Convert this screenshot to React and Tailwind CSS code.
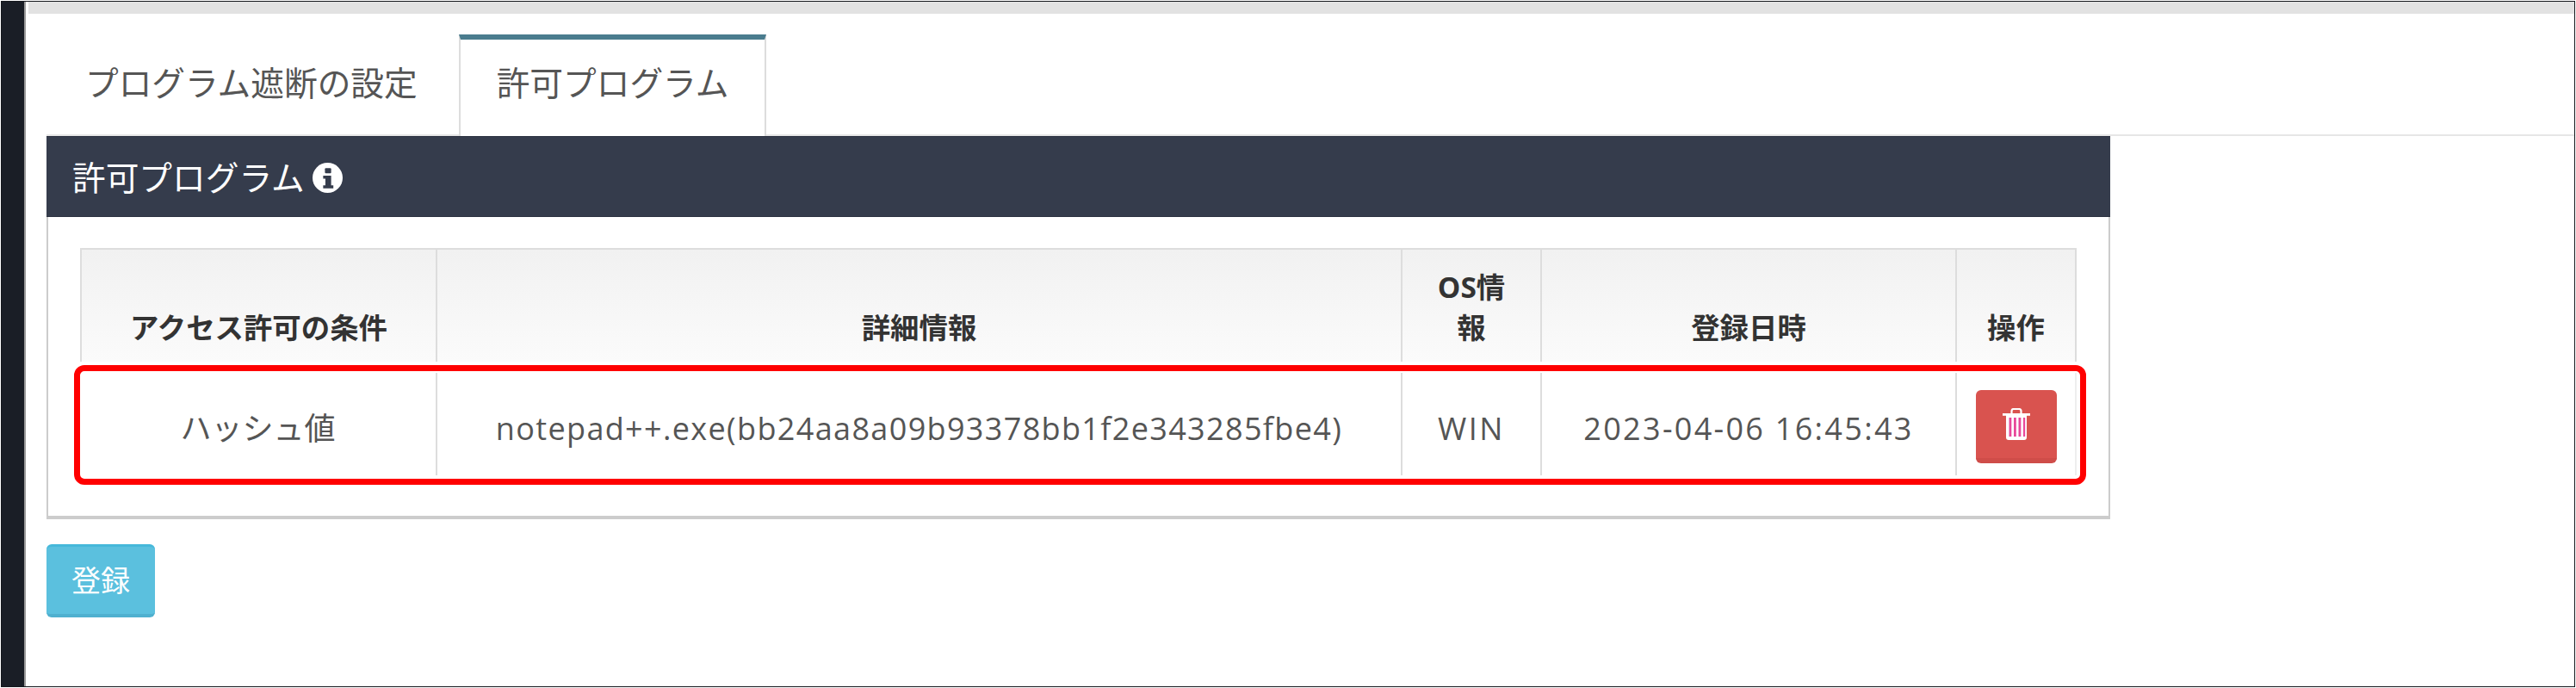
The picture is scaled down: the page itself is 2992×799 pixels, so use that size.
const jp = "font-['Open_Sans','Noto_Sans_CJK_JP',sans-serif]";

function InfoIcon() {
  return (
    <svg viewBox="0 0 34 34" className="ml-[9px] w-[35px] h-[35px] shrink-0">
      <circle cx="17" cy="17" r="17" fill="#fff" />
      <rect x="14" y="6" width="7" height="6" rx="1" fill="#353c4c" />
      <path d="M12 14.5h9v11h2.5V29h-11.5v-3.500h2.500v-7.500H12z" fill="#353c4c" />
    </svg>
  );
}

function TrashIcon() {
  return (
    <svg viewBox="0 0 32 37" className="w-[32px] h-[37px]">
      <path d="M10.500 7V3.500Q10.500 1 13 1h6q2.500 0 2.500 2.500V7" fill="none" stroke="#fff" strokeWidth="2.200" />
      <rect x="0" y="6" width="32" height="2.800" fill="#fff" />
      <path d="M4 8v26q0 3 3 3h18q3 0 3-3V8z" fill="#fff" />
      <rect x="7.500" y="11" width="2.800" height="22" fill="#e8489a" />
      <rect x="13" y="11" width="2.800" height="22" fill="#e8489a" />
      <rect x="18.500" y="11" width="2.800" height="22" fill="#e8489a" />
      <rect x="24" y="11" width="2.200" height="22" fill="#e8489a" />
    </svg>
  );
}

const grid = "grid grid-cols-[413px_1121px_162px_482px_141px]";

export default function App() {
  return (
    <div className={`w-[2992px] h-[799px] p-px bg-white overflow-hidden ${jp}`}>
      <div className="h-full flex border border-[#15171c]">
        <div className="w-[26px] bg-[#1a1e26] shrink-0" />
        <div className="w-[2px] bg-[#9a9a9a] shrink-0" />
        <main className="flex-1 flex flex-col bg-white min-w-0">
          <div className="ml-[3px] h-[14px] bg-[#e2e2e2] shrink-0" />
          <div className="pl-[24px]">
            <div className="mt-[24px] flex gap-[8px] border-b-2 border-[#e6e6e6] h-[118px]">
              <div className="w-[471px] pl-[45px] pt-[28px] text-[38.7px] leading-[56px] text-[#555]">プログラム遮断の設定</div>
              <div className="w-[357px] h-[118px] text-center bg-white border-x-2 border-t-[6px] border-x-[#dddddd] border-t-[#4a7c8e] pt-[22px] text-[38.7px] leading-[56px] text-[#555]">
                許可プログラム
              </div>
            </div>
            <section className="w-[2397px]">
              <div className="h-[94px] bg-[#353c4c] border-y border-[#2b3140] flex items-center pl-[30px] pt-[2px] text-[38.7px] text-white">
                <span>許可プログラム</span>
                <InfoIcon />
              </div>
              <div className="border-x-2 border-b-4 border-[#cccccc] pt-[36px] pl-[37px] pr-[37px] pb-[47px]">
                <div className={`${grid} h-[132px] border-t-2 border-[#dddddd] bg-linear-to-b from-[#f1f1f1] to-[#fbfbfb] text-[33.4px] leading-[47px] font-bold text-[#333] text-center`}>
                  <div className="border-l-2 border-[#dddddd] flex items-end justify-center pb-[16px] px-[10px]">アクセス許可の条件</div>
                  <div className="border-l-2 border-[#dddddd] flex items-end justify-center pb-[16px] px-[10px]">詳細情報</div>
                  <div className="border-l-2 border-[#dddddd] flex items-end justify-center pb-[16px] px-[30px]">OS情報</div>
                  <div className="border-l-2 border-[#dddddd] flex items-end justify-center pb-[16px] px-[10px]">登録日時</div>
                  <div className="border-x-2 border-[#dddddd] flex items-end justify-center pb-[16px] px-[10px]">操作</div>
                </div>
                <div className={`relative ${grid} mt-[13px] h-[119px] text-[36px] text-[#555] text-center`}>
                  <div className="flex items-center justify-center pt-[10px]">ハッシュ値</div>
                  <div className="border-l-2 border-[#dddddd] flex items-center justify-center pt-[10px] tracking-[1.35px]">notepad++.exe(bb24aa8a09b93378bb1f2e343285fbe4)</div>
                  <div className="border-l-2 border-[#dddddd] flex items-center justify-center pt-[10px] tracking-[2.5px]">WIN</div>
                  <div className="border-l-2 border-[#dddddd] flex items-center justify-center pt-[10px] tracking-[2.3px]">2023-04-06 16:45:43</div>
                  <div className="border-l-2 border-r-2 border-l-[#dddddd] border-r-[#eeeeee] flex items-center justify-center">
                    <button className="mt-[6px] w-[94px] h-[85px] bg-[#d9534f] border-b-[6px] border-[#cf4d49] rounded-[6px] flex items-center justify-center">
                      <TrashIcon />
                    </button>
                  </div>
                  <div className="absolute -left-[7px] -top-[9px] w-[2337px] h-[139px] border-[7px] border-[#ff0000] rounded-[12px]" />
                </div>
              </div>
            </section>
            <button className="mt-[29px] w-[126px] h-[85px] bg-[#5bc0de] border-t-[3px] border-b-[4px] border-t-[#46b8da] border-b-[#4fb0cf] rounded-[6px] text-[34px] text-white">
              登録
            </button>
          </div>
        </main>
      </div>
    </div>
  );
}
